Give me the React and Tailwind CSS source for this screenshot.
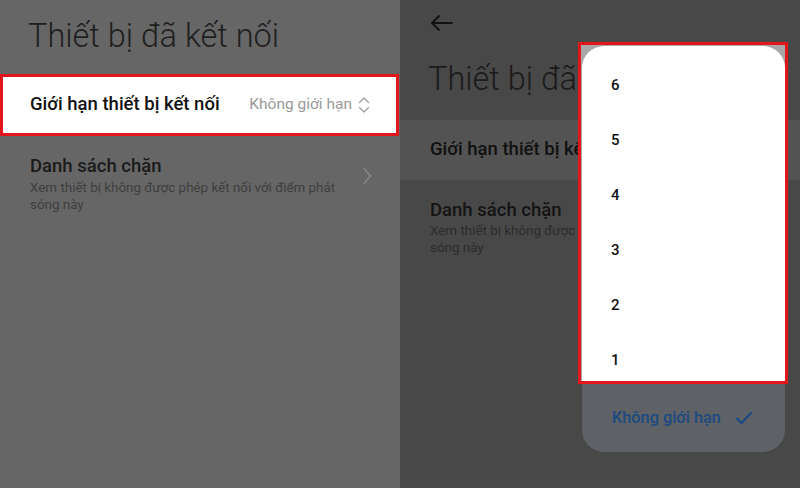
import React from "react";

const font = { fontFamily: "Roboto, 'Noto Sans', sans-serif" };

function UpDown({ className }) {
  return (
    <svg width="12" height="18" viewBox="0 0 12 18" className={className} fill="none" stroke="currentColor" strokeWidth="1.4" strokeLinecap="round" strokeLinejoin="round">
      <path d="M1.5 6.5 L6 2 L10.5 6.5" />
      <path d="M1.5 11.5 L6 16 L10.5 11.5" />
    </svg>
  );
}

function ChevronRight({ className }) {
  return (
    <svg width="10" height="18" viewBox="0 0 10 18" className={className} fill="none" stroke="currentColor" strokeWidth="1.3" strokeLinecap="round" strokeLinejoin="round">
      <path d="M2 1.5 L8.5 9 L2 16.5" />
    </svg>
  );
}

function BackArrow() {
  return (
    <svg width="24" height="18" viewBox="0 0 24 18" fill="none" stroke="#111" strokeWidth="1.8" strokeLinecap="round" strokeLinejoin="round">
      <path d="M2 9 H22" />
      <path d="M9 2 L2 9 L9 16" />
    </svg>
  );
}

function Check() {
  return (
    <svg width="18" height="14" viewBox="0 0 18 14" fill="none" stroke="#1d4a80" strokeWidth="2.4" strokeLinecap="round" strokeLinejoin="round">
      <path d="M2 7.5 L6.5 12 L16 2" />
    </svg>
  );
}

export default function App() {
  return (
    <div className="flex w-[800px] h-[488px] overflow-hidden" style={font}>
      {/* Left panel */}
      <div className="w-[400px] h-full bg-[#666666] flex flex-col">
        <div className="pl-[28px] pt-[15px] h-[74px] text-[32.5px] font-light leading-[42px] text-[#1f1f1f] whitespace-nowrap">
          Thiết bị đã kết nối
        </div>
        <div className="h-[62px] w-[399px] border-[3px] border-[#e3161c] bg-white flex items-center pl-[27px] pr-[26px]">
          <span className="text-[18.5px] font-medium text-[#111]">Giới hạn thiết bị kết nối</span>
          <span className="ml-auto text-[15.5px] text-[#9a9a9a]">Không giới hạn</span>
          <UpDown className="ml-[6px] text-[#a0a0a0]" />
        </div>
        <div className="flex items-center pl-[30px] pr-[28px] pt-[18px]">
          <div className="flex-1">
            <div className="text-[18.5px] font-medium text-[#1a1a1a] leading-[25px]">Danh sách chặn</div>
            <div className="mt-[1px] text-[13.4px] leading-[16.5px] text-[#3e3e3e] w-[330px]">
              Xem thiết bị không được phép kết nối với điểm phát sóng này
            </div>
          </div>
          <ChevronRight className="text-[#8a8a8a] -mt-[16px]" />
        </div>
      </div>

      {/* Right panel */}
      <div className="relative w-[400px] h-full bg-[#484848] flex flex-col">
        <div className="pl-[30px] pt-[14px] h-[50px]">
          <BackArrow />
        </div>
        <div className="ml-[28px] w-[150px] overflow-hidden h-[70px] text-[32.5px] font-light leading-[58px] text-[#1b1b1b] whitespace-nowrap">
          Thiết bị đã kết nối
        </div>
        <div className="h-[60px] bg-[#535353] flex items-center pl-[30px]">
          <span className="w-[148px] overflow-hidden text-[18.5px] font-medium text-[#111] whitespace-nowrap">Giới hạn thiết bị kết nối</span>
        </div>
        <div className="ml-[30px] pt-[18px] w-[148px] overflow-hidden">
          <div className="text-[18.5px] font-medium text-[#141414] leading-[25px] whitespace-nowrap">Danh sách chặn</div>
          <div className="text-[13.4px] leading-[16.5px] text-[#2c2c2c] w-[330px]">
            Xem thiết bị không được phép kết nối với điểm phát sóng này
          </div>
        </div>

        {/* Popup */}
        <div className="absolute left-[178px] top-[42px] w-[210px] flex flex-col">
          <div className="h-[342px] border-[3px] border-[#e3161c] bg-[#a8a8a8] pt-[1px] pl-[1px]">
            <div className="h-full bg-white rounded-t-[22px] overflow-hidden pt-[12px] pl-[29px]">
              {["6", "5", "4", "3", "2", "1"].map((n) => (
                <div key={n} className="h-[55px] flex items-center text-[15px] font-medium text-[#111]">
                  {n}
                </div>
              ))}
            </div>
          </div>
          <div className="ml-[4px] mr-[3px] h-[68px] bg-[#5e6166] rounded-b-[22px] flex items-center pl-[30px] pr-[32px]">
            <span className="text-[16.3px] font-medium text-[#1d4a80]">Không giới hạn</span>
            <span className="ml-auto"><Check /></span>
          </div>
        </div>
      </div>
    </div>
  );
}
